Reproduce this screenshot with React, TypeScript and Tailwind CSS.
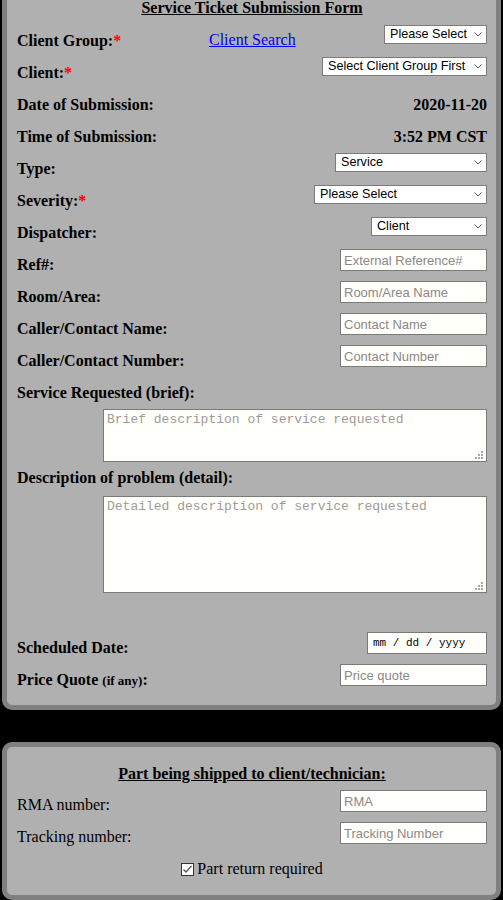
import React from 'react';

const Req = () => <span className="text-[#ff0000]">*</span>;

const Chevron = () => (
  <svg className="pointer-events-none absolute right-[5px] top-[7px]" width="8" height="5" viewBox="0 0 8 5">
    <path d="M0.5 0.5 L4 4 L7.5 0.5" stroke="#5a5a5a" strokeWidth="1" fill="none" />
  </svg>
);

const Select: React.FC<{ className: string; value: string }> = ({ className, value }) => (
  <div className={`relative mt-[3px] ${className}`}>
    <select
      defaultValue={value}
      className="block h-[19px] w-full appearance-none rounded-none border border-[#7a7a7a] bg-white pl-[5px] pr-[12px] font-['Liberation_Sans',Arial,sans-serif] text-[12.6px] leading-[17px] text-black outline-none"
    >
      <option>{value}</option>
    </select>
    <Chevron />
  </div>
);

const TextInput: React.FC<{ placeholder: string; mt?: string }> = ({ placeholder, mt = 'mt-[3px]' }) => (
  <input
    type="text"
    placeholder={placeholder}
    className={`${mt} block h-[22px] w-[147px] rounded-none border border-[#7a7a7a] bg-[#fffffc] px-[3px] font-['Liberation_Sans',Arial,sans-serif] text-[13px] text-black outline-none placeholder:text-[#8e8787]`}
  />
);

const Grip = () => (
  <svg className="pointer-events-none absolute bottom-[3px] right-[4px]" width="8" height="8" viewBox="0 0 8 8">
    <rect x="6" y="0" width="2" height="2" fill="#a8a8a8" />
    <rect x="3" y="3" width="2" height="2" fill="#a8a8a8" />
    <rect x="6" y="3" width="2" height="2" fill="#a8a8a8" />
    <rect x="0" y="6" width="2" height="2" fill="#a8a8a8" />
    <rect x="3" y="6" width="2" height="2" fill="#a8a8a8" />
    <rect x="6" y="6" width="2" height="2" fill="#a8a8a8" />
  </svg>
);

const Area: React.FC<{ placeholder: string; className: string }> = ({ placeholder, className }) => (
  <div className={`relative ml-auto w-[384px] ${className}`}>
    <textarea
      placeholder={placeholder}
      className="block h-full w-full resize-none rounded-none border border-[#7a7a7a] bg-[#fffffc] px-[3px] py-[2px] font-['Liberation_Mono','Courier_New',monospace] text-[13px] leading-[15px] text-black outline-none placeholder:text-[#a09a9a]"
    />
    <Grip />
  </div>
);

const Row: React.FC<{ label: React.ReactNode; children?: React.ReactNode; bold?: boolean }> = ({ label, children, bold = true }) => (
  <div className="flex h-8 items-start justify-between">
    <div className={`pt-[10px] leading-[18px] ${bold ? 'font-bold' : ''}`}>{label}</div>
    {children}
  </div>
);

const Value: React.FC<{ children: React.ReactNode }> = ({ children }) => (
  <div className="pt-[10px] font-bold leading-[18px]">{children}</div>
);

const App: React.FC = () => {
  return (
    <div className="min-h-screen overflow-hidden bg-black font-['Liberation_Serif','Times_New_Roman',serif] text-[16px] text-black">
      {/* Ticket panel */}
      <div className="mx-[2px] -mt-[14px] rounded-[10px] border-[5px] border-[#808080] bg-[#b0b0b0] pb-[12px] pl-[10px] pr-[9px] pt-[8px]">
        <h1 className="mb-[5px] text-center font-bold leading-[18px] underline">Service Ticket Submission Form</h1>

        <div className="flex h-8 items-start">
          <div className="w-[192px] pt-[10px] font-bold leading-[18px]">
            Client Group:<Req />
          </div>
          <a href="#" className="pt-[9px] leading-[18px] text-[#0000ee] underline">
            Client Search
          </a>
          <Select className="ml-auto w-[103px]" value="Please Select" />
        </div>

        <Row label={<>Client:<Req /></>}>
          <Select className="w-[165px]" value="Select Client Group First" />
        </Row>
        <Row label="Date of Submission:">
          <Value>2020-11-20</Value>
        </Row>
        <Row label="Time of Submission:">
          <Value>3:52 PM CST</Value>
        </Row>
        <Row label="Type:">
          <Select className="w-[152px]" value="Service" />
        </Row>
        <Row label={<>Severity:<Req /></>}>
          <Select className="w-[173px]" value="Please Select" />
        </Row>
        <Row label="Dispatcher:">
          <Select className="w-[116px]" value="Client" />
        </Row>
        <Row label="Ref#:">
          <TextInput placeholder="External Reference#" />
        </Row>
        <Row label="Room/Area:">
          <TextInput placeholder="Room/Area Name" />
        </Row>
        <Row label="Caller/Contact Name:">
          <TextInput placeholder="Contact Name" />
        </Row>
        <Row label="Caller/Contact Number:">
          <TextInput placeholder="Contact Number" />
        </Row>
        <Row label="Service Requested (brief):" />

        <Area className="mt-[3px] h-[53px]" placeholder="Brief description of service requested" />

        <div className="mt-[7px] font-bold leading-[18px]">Description of problem (detail):</div>

        <Area className="mt-[9px] h-[97px]" placeholder="Detailed description of service requested" />

        <div className="mt-[36px]" />
        <Row label="Scheduled Date:">
          <div className="mt-[3px] flex h-[22px] w-[120px] items-center border border-[#7a7a7a] bg-[#fffffc] pl-[5px] font-['Liberation_Mono','Courier_New',monospace] text-[11px] text-black">
            mm / dd / yyyy
          </div>
        </Row>
        <Row label={<>Price Quote <span className="text-[13px]">(if any)</span>:</>}>
          <TextInput placeholder="Price quote" />
        </Row>
      </div>

      {/* Shipping panel */}
      <div className="mx-[2px] mt-[32px] rounded-[10px] border-[5px] border-[#808080] bg-[#b0b0b0] pb-[17px] pl-[10px] pr-[9px] pt-[18px]">
        <h2 className="text-center font-bold leading-[18px] underline">Part being shipped to client/technician:</h2>
        <div className="mt-[3px]" />
        <Row bold={false} label="RMA number:">
          <TextInput mt="mt-[4px]" placeholder="RMA" />
        </Row>
        <Row bold={false} label="Tracking number:">
          <TextInput mt="mt-[4px]" placeholder="Tracking Number" />
        </Row>
        <div className="mt-[10px] flex items-center justify-center leading-[18px]">
          <span className="mr-[3px] flex h-[13px] w-[13px] items-center justify-center border border-[#333333] bg-white">
            <svg width="11" height="11" viewBox="0 0 11 11">
              <path d="M1.5 5.5 L4 8 L9.5 2" stroke="#555555" strokeWidth="1.3" fill="none" />
            </svg>
          </span>
          Part return required
        </div>
      </div>
    </div>
  );
};

export default App;
